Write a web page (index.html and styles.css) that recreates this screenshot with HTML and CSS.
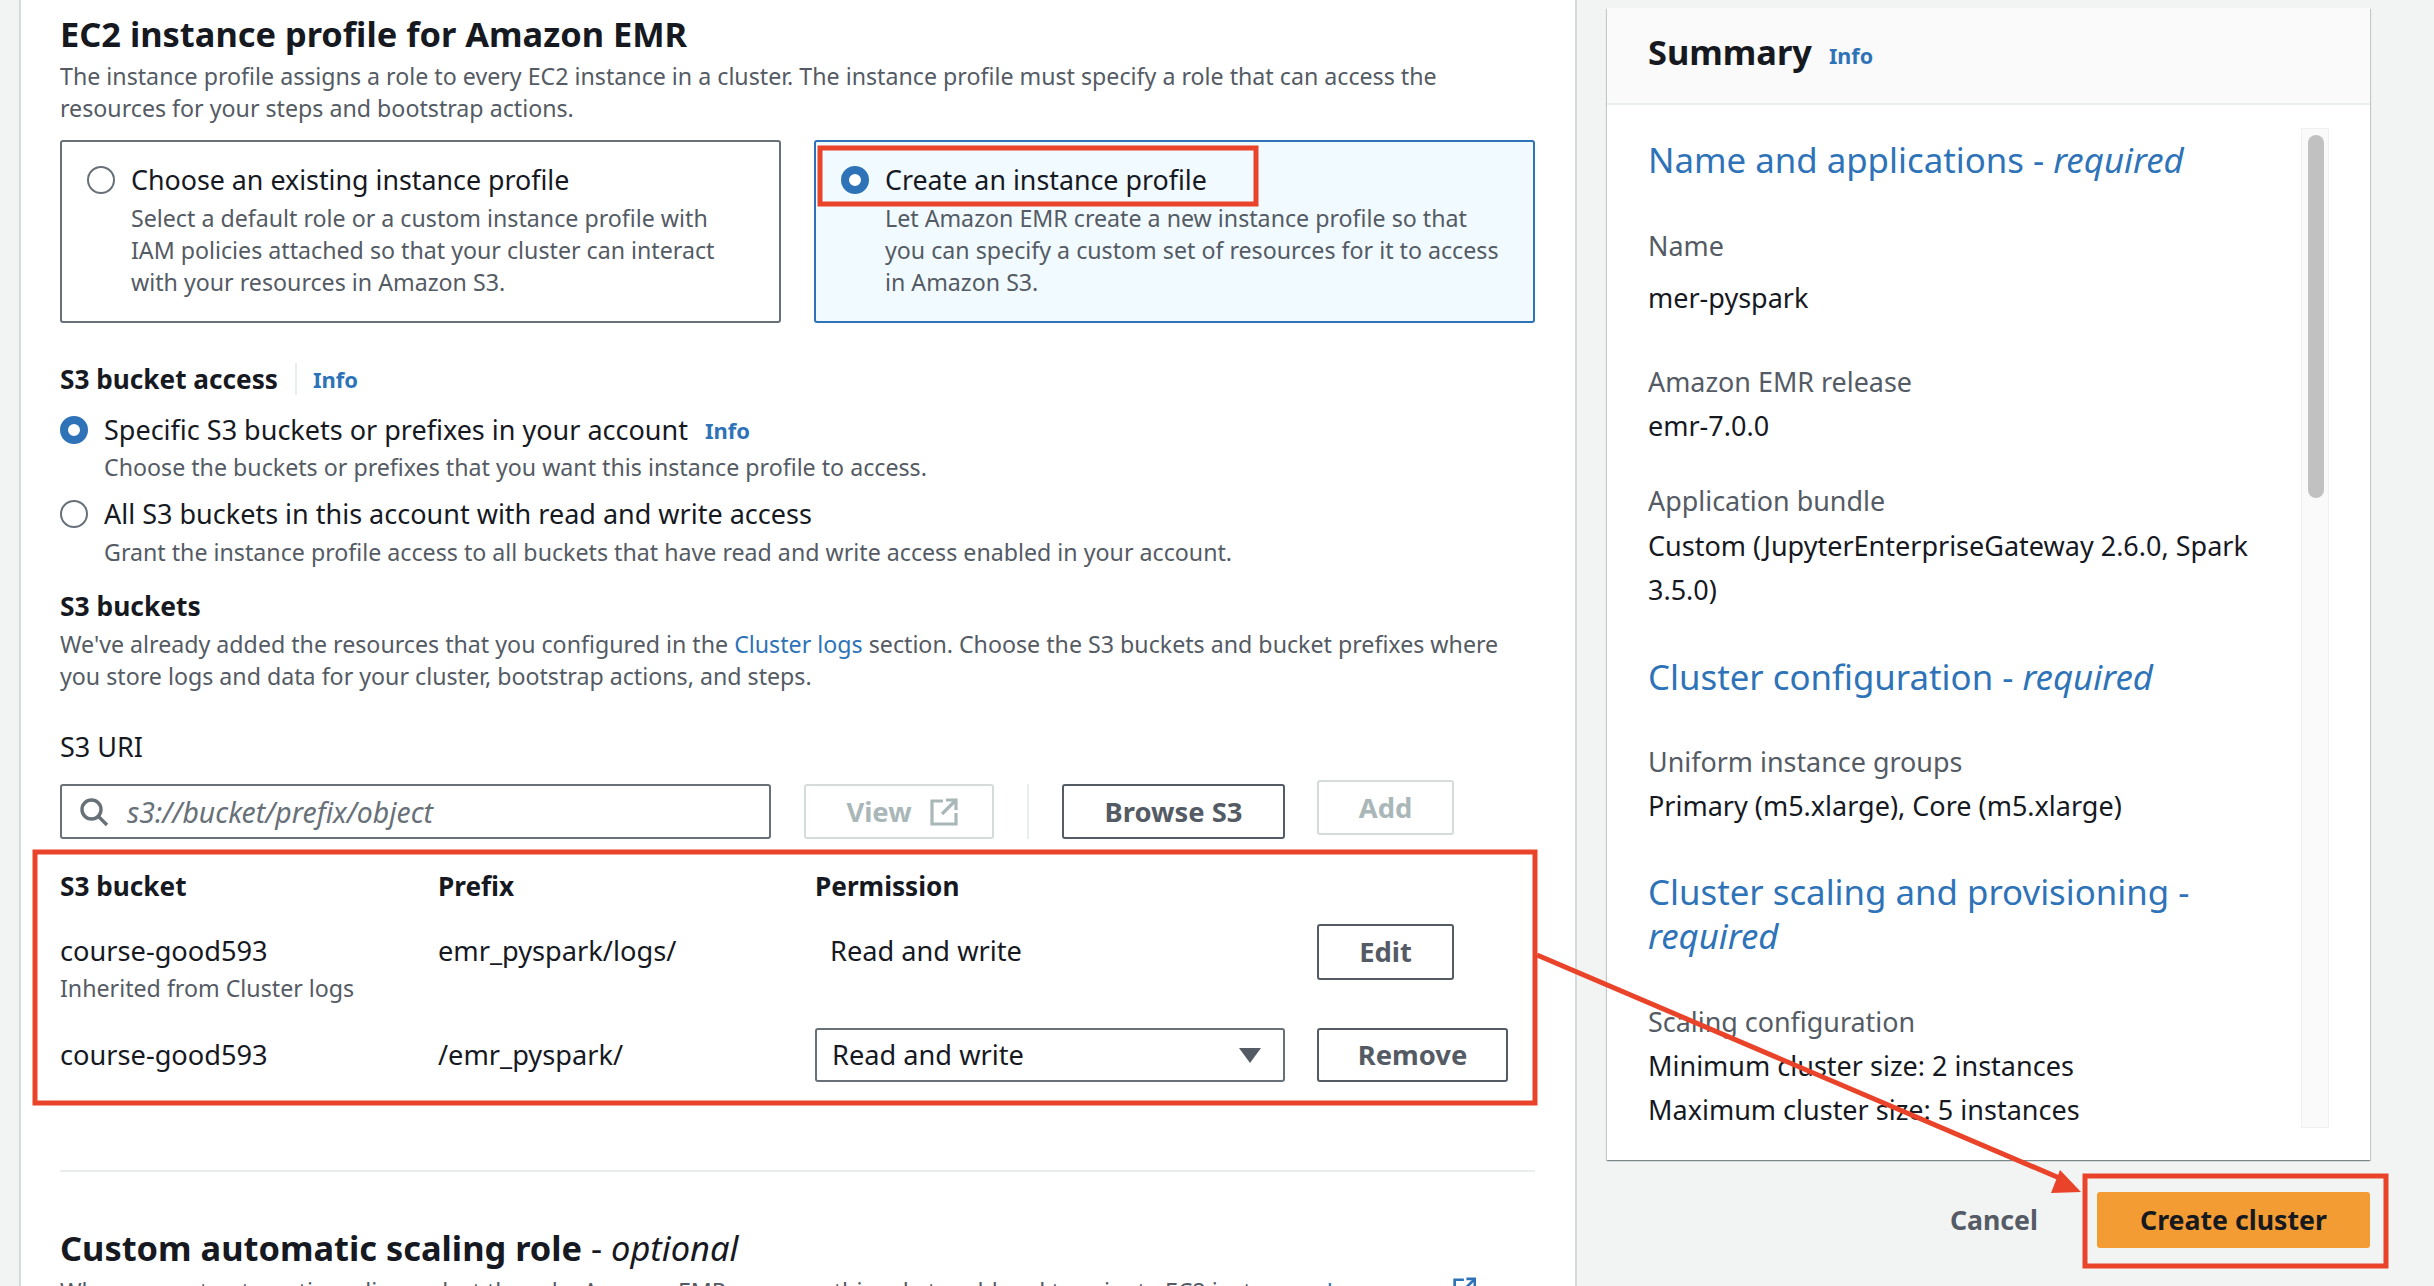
FILE: index.html
```html
<!DOCTYPE html>
<html lang="en">
<head>
    <meta charset="UTF-8">
    <title>Create cluster</title>
    <link rel="stylesheet" href="styles.css">
</head>
<body>
    <div class="page">
        <!-- left form -->
        <main class="form">
            <h2 class="title">EC2 instance profile for Amazon EMR</h2>
            <p class="muted desc">The instance profile assigns a role to every EC2 instance in a cluster. The instance profile must specify a role that can access the<br>resources for your steps and bootstrap actions.</p>

            <div class="cards">
                <div class="card">
                    <div class="card-label"><span class="radio"></span>Choose an existing instance profile</div>
                    <p class="muted card-desc">Select a default role or a custom instance profile with<br>IAM policies attached so that your cluster can interact<br>with your resources in Amazon S3.</p>
                </div>
                <div class="card card-on">
                    <div class="card-label"><span class="radio radio-on"></span>Create an instance profile</div>
                    <p class="muted card-desc">Let Amazon EMR create a new instance profile so that<br>you can specify a custom set of resources for it to access<br>in Amazon S3.</p>
                </div>
            </div>

            <div class="access-head">
                <strong>S3 bucket access</strong>
                <a class="info info-split">Info</a>
            </div>
            <div class="option opt-first"><span class="radio radio-on"></span>Specific S3 buckets or prefixes in your account<a class="info opt-info">Info</a></div>
            <p class="muted option-desc">Choose the buckets or prefixes that you want this instance profile to access.</p>
            <div class="option opt-second"><span class="radio"></span>All S3 buckets in this account with read and write access</div>
            <p class="muted option-desc opt-second-desc">Grant the instance profile access to all buckets that have read and write access enabled in your account.</p>

            <strong class="block buckets-head">S3 buckets</strong>
            <p class="muted buckets-desc">We've already added the resources that you configured in the <a class="link">Cluster logs</a> section. Choose the S3 buckets and bucket prefixes where<br>you store logs and data for your cluster, bootstrap actions, and steps.</p>

            <div class="uri-label">S3 URI</div>
            <div class="uri-row">
                <div class="search">
                    <svg class="search-icon" viewBox="0 0 30 30" fill="none" stroke="#687078" stroke-width="3.4"><circle cx="12.5" cy="12.5" r="9.5"/><path d="M19.5 19.5L28 28"/></svg>
                    <span class="placeholder">s3://bucket/prefix/object</span>
                </div>
                <button class="btn btn-off btn-view">View
                    <svg class="ext-icon" viewBox="0 0 28 28" fill="none" stroke="#aab7b8" stroke-width="3.2"><path d="M13 3H2v23h24V15"/><path d="M16 2h10v10"/><path d="M25.5 2.5L12 16"/></svg>
                </button>
                <span class="vline"></span>
                <button class="btn btn-browse">Browse S3</button>
                <button class="btn btn-off btn-add">Add</button>
            </div>

            <div class="table">
                <strong class="col-head">S3 bucket</strong>
                <strong class="col-head">Prefix</strong>
                <strong class="col-head col-wide">Permission</strong>

                <div class="cell-top">course-good593<div class="muted sub">Inherited from Cluster logs</div></div>
                <div class="cell-top">emr_pyspark/logs/</div>
                <div class="cell-top perm">Read and write</div>
                <div><button class="btn btn-small">Edit</button></div>

                <div class="cell-mid">course-good593</div>
                <div class="cell-mid">/emr_pyspark/</div>
                <div class="select">Read and write<span class="caret"></span></div>
                <div><button class="btn btn-remove">Remove</button></div>
            </div>

            <hr class="rule">

            <h2 class="title title-opt">Custom automatic scaling role <span class="opt">- <em>optional</em></span></h2>
            <div class="last">
                <p class="muted">When you set automatic scaling, select the role. Amazon EMR assumes this role to add and terminate EC2 instances. <a class="link">Learn more</a></p>
                <svg class="ext-link" viewBox="0 0 28 28" fill="none" stroke="#2e73b8" stroke-width="3.2"><path d="M13 3H2v23h24V15"/><path d="M16 2h10v10"/><path d="M25.5 2.5L12 16"/></svg>
            </div>
        </main>

        <!-- right summary -->
        <aside class="side">
            <section class="summary">
                <header class="summary-head"><strong>Summary</strong><a class="info summary-info">Info</a></header>
                <div class="summary-body">
                    <div class="summary-scroll">
                        <a class="sum-link sum-1">Name and applications - <em>required</em></a>
                        <div class="sum-label l-name">Name</div>
                        <div class="sum-val v-name">mer-pyspark</div>
                        <div class="sum-label l-rel">Amazon EMR release</div>
                        <div class="sum-val v-near">emr-7.0.0</div>
                        <div class="sum-label l-app">Application bundle</div>
                        <div class="sum-val v-wrap">Custom (JupyterEnterpriseGateway 2.6.0, Spark<br>3.5.0)</div>
                        <a class="sum-link sum-2">Cluster configuration - <em>required</em></a>
                        <div class="sum-label l-uni">Uniform instance groups</div>
                        <div class="sum-val v-near">Primary (m5.xlarge), Core (m5.xlarge)</div>
                        <a class="sum-link sum-3">Cluster scaling and provisioning -<br><em>required</em></a>
                        <div class="sum-label l-scale">Scaling configuration</div>
                        <div class="sum-val v-near">Minimum cluster size: 2 instances</div>
                        <div class="sum-val v-near">Maximum cluster size: 5 instances</div>
                    </div>
                    <div class="track"><div class="thumb"></div></div>
                </div>
            </section>
            <div class="actions">
                <button class="cancel">Cancel</button>
                <button class="create">Create cluster</button>
            </div>
        </aside>

        <!-- red annotations drawn on top of the screenshot -->
        <svg class="notes" viewBox="0 0 2434 1286" fill="none" stroke="#e9432a" stroke-width="5">
            <rect x="820" y="148" width="436" height="56"/>
            <rect x="35" y="852" width="1500" height="251"/>
            <rect x="2085" y="1176" width="301" height="90"/>
            <path d="M1537 955L2064 1180"/>
            <path d="M2060 1170L2051 1193L2081 1192Z" fill="#e9432a" stroke="none"/>
        </svg>
    </div>
</body>
</html>
```

FILE: styles.css
```css
*{
    margin: 0;
    padding: 0;
    box-sizing: border-box;
}

body{
    width: 2434px;
    height: 1286px;
    overflow: hidden;
    background-color: #f2f3f3;
    font-family: "Noto Sans", "Open Sans", sans-serif;
    font-size: 23.2px;
    line-height: 32px;
    color: #16191f;
}

.page{
    position: relative;
    display: flex;
    height: 1286px;
    padding-left: 19px;
}

strong{
    font-weight: 700;
}
.block{
    display: block;
}
.muted{
    color: #545b64;
}
.link, .info{
    color: #2e73b8;
}
.info{
    font-weight: 700;
    font-size: 22px;
}

/* left form */
.form{
    width: 1558px;
    height: 1286px;
    overflow: hidden;
    padding: 14px 40px 0 39px;
    background-color: #fff;
    border-left: 2px solid #d5dbdb;
    border-right: 2px solid #d5dbdb;
}
.title{
    font-size: 34.4px;
    line-height: 40px;
    font-weight: 700;
}
.desc{
    margin-top: 6px;
}

.cards{
    display: flex;
    gap: 33px;
    margin-top: 16px;
}
.card{
    width: 722px;
    height: 183px;
    padding: 22px 0 0 25px;
    border: 2px solid #687078;
    border-radius: 3px;
}
.card-on{
    background-color: #f1faff;
    border-color: #2e73b8;
}
.card-label{
    display: flex;
    align-items: center;
    gap: 16px;
    font-size: 26.8px;
}
.card-desc{
    margin: 6px 0 0 44px;
}

.radio{
    flex: none;
    width: 28px;
    height: 28px;
    border: 2px solid #687078;
    border-radius: 50%;
    background-color: #fff;
}
.radio-on{
    border: 8px solid #2e73b8;
}

.access-head{
    display: flex;
    align-items: center;
    margin-top: 40px;
    font-size: 26.2px;
}
.info-split{
    margin-left: 17px;
    padding-left: 16px;
    border-left: 2px solid #eaeded;
}

.option{
    display: flex;
    align-items: center;
    gap: 16px;
    font-size: 27px;
}
.opt-first{
    margin-top: 19px;
}
.opt-second{
    margin-top: 15px;
}
.opt-info{
    margin-left: 1px;
}
.option-desc{
    margin: 5px 0 0 44px;
}
.opt-second-desc{
    margin-top: 6px;
}

.buckets-head{
    margin-top: 22px;
    font-size: 26.4px;
}
.buckets-desc{
    margin-top: 6px;
}
.uri-label{
    margin-top: 39px;
    font-size: 27px;
}

.uri-row{
    display: flex;
    align-items: flex-start;
    margin-top: 21px;
}
.search{
    display: flex;
    align-items: center;
    width: 711px;
    height: 55px;
    padding-left: 17px;
    border: 2px solid #687078;
    border-radius: 3px;
}
.search-icon{
    width: 30px;
    height: 30px;
}
.placeholder{
    margin-left: 18px;
    font-style: italic;
    font-size: 28.4px;
    color: #687078;
}

.btn{
    height: 55px;
    font: inherit;
    font-size: 27.4px;
    font-weight: 700;
    color: #545b64;
    background-color: #fff;
    border: 2px solid #545b64;
    border-radius: 3px;
}
.btn-off{
    color: #aab7b8;
    border-color: #d5dbdb;
}
.btn-view{
    display: flex;
    align-items: center;
    justify-content: center;
    gap: 18px;
    width: 190px;
    margin-left: 33px;
    padding-left: 6px;
}
.ext-icon{
    width: 28px;
    height: 28px;
}
.vline{
    width: 2px;
    height: 55px;
    margin: 0 33px;
    background-color: #eaeded;
}
.btn-browse{
    width: 223px;
}
.btn-add{
    width: 137px;
    margin: -4px 0 0 32px;
}

/* bucket table */
.table{
    display: grid;
    grid-template-columns: 378px 377px 502px 219px;
    margin-top: 31px;
    font-size: 27.2px;
}
.col-head{
    font-size: 26.2px;
}
.col-wide{
    grid-column: span 2;
}
.cell-top{
    margin-top: 33px;
}
.perm{
    padding-left: 15px;
}
.sub{
    margin-top: 5px;
    font-size: 23.2px;
}
.cell-mid{
    margin-top: 23px;
    align-self: center;
}
.btn-small{
    width: 137px;
    height: 56px;
    margin-top: 22px;
}
.btn-remove{
    width: 191px;
    height: 54px;
    margin-top: 24px;
}
.select{
    display: flex;
    align-items: center;
    justify-content: space-between;
    width: 470px;
    height: 54px;
    margin-top: 24px;
    padding: 0 22px 0 15px;
    background-color: #fff;
    border: 2px solid #687078;
    border-radius: 3px;
}
.caret{
    width: 0;
    height: 0;
    border-left: 11px solid transparent;
    border-right: 11px solid transparent;
    border-top: 15px solid #545b64;
}

.rule{
    height: 2px;
    margin-top: 88px;
    border: 0;
    background-color: #eaeded;
}
.title-opt{
    margin-top: 56px;
}
.opt{
    font-weight: 400;
}
.last{
    display: flex;
    justify-content: space-between;
    margin-top: 7px;
    padding-right: 59px;
    white-space: nowrap;
}
.ext-link{
    width: 28px;
    height: 28px;
}

/* summary panel */
.side{
    width: 793px;
    padding: 8px 0 0 30px;
}
.summary{
    width: 763px;
    height: 1152px;
    background-color: #fff;
    box-shadow: 0 1px 1px 0 rgba(0, 28, 36, 0.3), 1px 1px 1px 0 rgba(0, 28, 36, 0.15), -1px 1px 1px 0 rgba(0, 28, 36, 0.15);
}
.summary-head{
    display: flex;
    align-items: center;
    height: 97px;
    padding: 0 0 8px 41px;
    background-color: #fafafa;
    border-bottom: 2px solid #eaeded;
    font-size: 34.4px;
}
.summary-info{
    margin: 8px 0 0 17px;
    font-size: 21.5px;
}
.summary-body{
    display: flex;
    justify-content: space-between;
    height: 1000px;
    margin-top: 23px;
    padding: 0 41px;
}
.summary-scroll{
    width: 640px;
    padding-top: 10px;
    overflow: hidden;
    font-size: 27px;
}
.sum-link{
    display: block;
    color: #2e73b8;
    font-size: 34.8px;
    line-height: 44px;
}
.sum-label{
    color: #545b64;
    font-size: 26.9px;
}
.sum-val{
    margin-top: 12px;
}
.l-name{ margin-top: 48px; }
.v-name{ margin-top: 20px; }
.l-rel{ margin-top: 52px; }
.l-app{ margin-top: 43px; }
.v-wrap{ margin-top: 7px; line-height: 44px; }
.sum-2{ margin-top: 43px; }
.l-uni{ margin-top: 47px; }
.sum-3{ margin-top: 48px; }
.l-scale{ margin-top: 48px; }

.track{
    width: 28px;
    height: 1000px;
    padding: 6px;
    background-color: #fafafa;
    border: 1px solid #f0f0f0;
}
.thumb{
    width: 16px;
    height: 363px;
    border-radius: 8px;
    background-color: #c1c1c1;
}

.actions{
    display: flex;
    align-items: center;
    justify-content: flex-end;
    gap: 59px;
    width: 763px;
    margin-top: 32px;
    font-size: 26.7px;
}
.cancel{
    font: inherit;
    font-weight: 700;
    color: #545b64;
    background: none;
    border: 0;
}
.create{
    width: 273px;
    height: 56px;
    font: inherit;
    font-weight: 700;
    color: #16191f;
    background-color: #f39c34;
    border: 0;
    border-radius: 3px;
}

/* red marks over the page */
.notes{
    position: absolute;
    left: 0;
    top: 0;
    width: 2434px;
    height: 1286px;
}
```
